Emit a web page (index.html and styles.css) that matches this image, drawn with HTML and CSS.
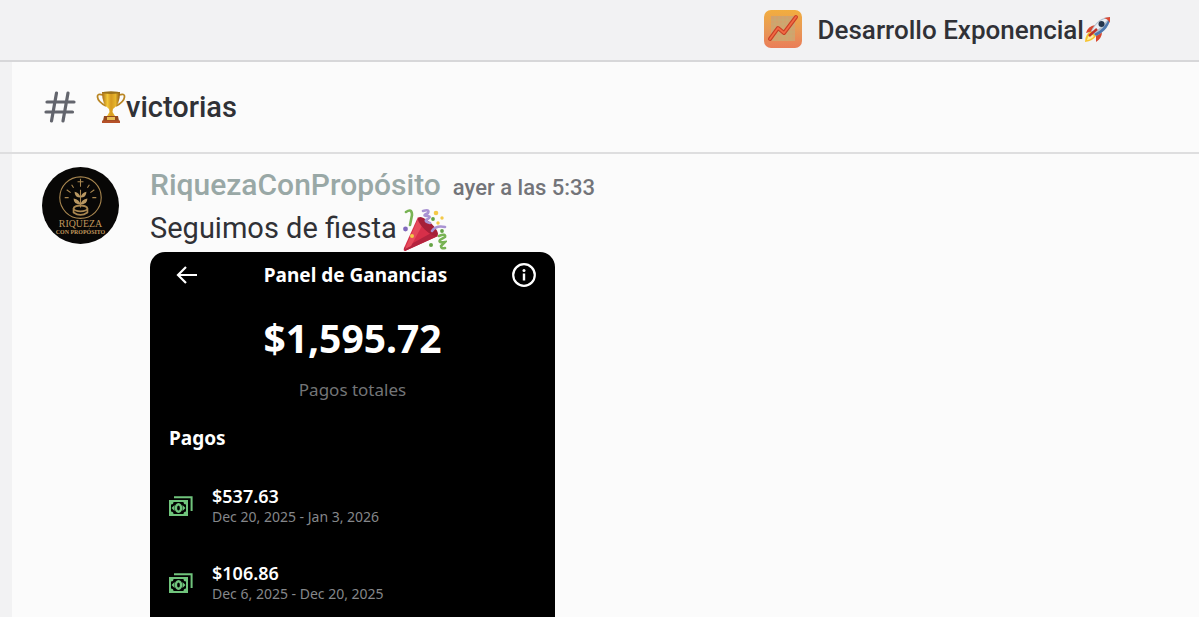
FILE: index.html
```html
<!DOCTYPE html>
<html lang="es">
<head>
<meta charset="utf-8">
<meta name="viewport" content="width=device-width, initial-scale=1">
<title>victorias</title>
<link rel="stylesheet" href="styles.css">
</head>
<body>
<svg class="defs" aria-hidden="true">
  <symbol id="cash" viewBox="0 0 24 20">
    <path d="M5 1.200H22.600V15" fill="none" stroke="currentColor" stroke-width="2"/>
    <path fill="currentColor" fill-rule="evenodd" d="M0 4h19v16H0zM4.500 6A2.500 2.500 0 0 1 2 8.500v7A2.500 2.500 0 0 1 4.500 18h10A2.500 2.500 0 0 1 17 15.500v-7A2.500 2.500 0 0 1 14.500 6z"/>
    <path fill="currentColor" d="M2.500 12l3-3v6zM16.500 12l-3-3v6z"/>
    <ellipse cx="9.500" cy="12" rx="2.600" ry="3.800" fill="none" stroke="currentColor" stroke-width="2.400"/>
  </symbol>
</svg>
<div class="app">
  <header class="titlebar">
    <svg class="server-icon" viewBox="0 0 38 38" aria-hidden="true">
      <defs><linearGradient id="sunset" x1="0" y1="0" x2="0" y2="1"><stop offset="0" stop-color="#f2ad3f"/><stop offset=".5" stop-color="#e89a55"/><stop offset="1" stop-color="#ea7d58"/></linearGradient></defs>
      <rect width="38" height="38" rx="7" fill="url(#sunset)"/>
      <path fill="#d3a16c" d="M7 6h24v25H7z"/>
      <path d="M7 10h24M7 14h24M7 18h24M7 22h24M7 26h24M11 6v25M15 6v25M19 6v25M23 6v25M27 6v25" stroke="#c2ae75" stroke-width=".6"/>
      <path d="M6 29l8-11 6 5L32 7" fill="none" stroke="#c93f26" stroke-width="4" stroke-linecap="round" stroke-linejoin="round"/>
      <path d="M6 29l8-11 6 5L32 7" fill="none" stroke="#f16a43" stroke-width="1.800" stroke-linecap="round" stroke-linejoin="round"/>
    </svg>
    <span class="server-name">Desarrollo Exponencial</span>
    <svg class="rocket" viewBox="0 0 28 28" aria-label="cohete">
      <path fill="#f7c531" d="M7 16Q1 19 1 27Q9 26 12 21z"/>
      <path fill="#fff0a5" d="M7 19Q4 21 3 25Q8 24 10 21z"/>
      <path fill="#d64730" d="M11 10Q4 11 2 18L9 16zM18 17Q18 23 12 27L12 19z"/>
      <path fill="#b2bfce" d="M26 2Q14 2 7 16L12 21Q26 14 26 2z"/>
      <path fill="#e9eef4" d="M25 3Q14 4 8 16L10 18Q19 11 25 3z"/>
      <path fill="#4e78ae" d="M26 2Q20 15 10 19L12 21Q26 14 26 2z"/>
      <path fill="#dc4932" d="M20 3L26 2 26 8Q24 4 20 3z"/>
      <circle cx="17.500" cy="9" r="3" fill="#25364c"/>
      <path d="M13 14L5 21" stroke="#bf3328" stroke-width="2.400"/>
    </svg>
  </header>
  <main class="chat">
    <div class="channel">
      <div class="channel-inner">
        <svg class="hash" viewBox="0 0 32 32" aria-hidden="true"><path d="M12.500 2L7.500 30M24 2L19 30M3 11H30M2 21H28.500" fill="none" stroke="#63656d" stroke-width="3.200" stroke-linecap="round"/></svg>
        <h1 class="channel-name">
          <svg class="trophy" viewBox="0 0 30 32" aria-label="trofeo">
            <defs><linearGradient id="gold"><stop offset="0" stop-color="#a66a13"/><stop offset=".3" stop-color="#f3c838"/><stop offset=".5" stop-color="#d6991f"/><stop offset=".75" stop-color="#e6b52c"/><stop offset="1" stop-color="#8d5710"/></linearGradient></defs>
            <path d="M7 4Q1 2 1.500 6Q2 11 10 15M23 4Q29 2 28.500 6Q28 11 20 15" fill="none" stroke="#b98522" stroke-width="1.800"/>
            <path fill="url(#gold)" d="M6 1H24Q24 14 17 18L16.500 21 19 25H11L13.500 21 13 18Q6 14 6 1z"/>
            <ellipse cx="15" cy="1.600" rx="9" ry="1.300" fill="#9b711a"/>
            <path fill="#93491e" d="M8 25H22L23 30H7z"/><path fill="#e8bd55" d="M11 26H19V29H11z"/><path fill="#b65129" d="M6 29.500H24V32H6z"/>
          </svg><span>victorias</span>
        </h1>
      </div>
    </div>
    <article class="message">
      <svg class="avatar" viewBox="0 0 78 78" role="img" aria-label="RiquezaConPropósito">
        <circle cx="39" cy="39" r="39" fill="#080706"/>
        <g fill="none" stroke="#a98750" stroke-width="1.100">
          <circle cx="39" cy="31" r="21"/>
          <path d="M39 12V20M36 15H42M39 23V41M30 18L32 21M48 18L46 21M25 23L29 26M53 23L49 26M23 31H27M55 31H51"/>
          <ellipse cx="39" cy="42" rx="7" ry="3" stroke-width="1.800"/><path d="M32 42V46Q39 51 46 46V42" stroke-width="1.800"/>
        </g>
        <path fill="#b99862" d="M39 31Q33 31 33 25Q38 26 39 31zM39 31Q45 31 45 25Q40 26 39 31zM39 38Q32 38 32 32Q38 33 39 38zM39 38Q46 38 46 32Q40 33 39 38z"/>
        <text x="39" y="61" class="avatar-big">RIQUEZA</text>
        <text x="39" y="68" class="avatar-small">CON PROPÓSITO</text>
      </svg>
      <div class="content">
        <div class="meta"><span class="author">RiquezaConPropósito</span><time class="time">ayer a las 5:33</time></div>
        <p class="text"><span>Seguimos de fiesta</span>
          <svg class="party" viewBox="0 0 44 42" aria-label="fiesta">
            <path fill="#d72f49" d="M15 8L35 27L2 42Q0 42 1 39z"/>
            <path fill="#b3233e" d="M30 23L35 27L2 42 1 39z"/>
            <path fill="#e64a5b" d="M15 10L20 15 8 37 2 40z"/>
            <ellipse cx="25" cy="17.500" rx="4.500" ry="13" transform="rotate(-47 25 17.500)" fill="#a61f38"/>
            <g fill="none" stroke-linecap="round" stroke-width="2.600">
              <path stroke="#78b354" d="M3 3Q9-1 9 6L7 16M36 27Q43 24 42 28L37 31Q35 34 42 33L38 37Q38 40 42 39"/>
              <path stroke="#a993d3" d="M20 2Q27 0 25 4Q18 7 25 7Q29 8 23 11Q22 13 27 14M29 22Q33 16 42 18"/>
            </g>
            <g fill="#f4c947"><circle cx="33" cy="4" r="2.300"/><circle cx="39" cy="9" r="1.700"/><circle cx="35" cy="14" r="1.700"/><circle cx="9" cy="27" r="2"/></g>
            <g fill="#65a346"><circle cx="30" cy="10" r="1.900"/><circle cx="39" cy="22" r="1.900"/><circle cx="28" cy="36" r="2"/></g>
            <circle cx="2.500" cy="20" r="2.400" fill="#8069bd"/>
          </svg>
        </p>
        <section class="panel">
          <div class="panel-top">
            <button class="icon-button back" type="button" aria-label="Volver"><svg class="icon" viewBox="0 0 24 24"><path d="M22 12H3M11 4L3 12l8 8" fill="none" stroke="currentColor" stroke-width="2.200"/></svg></button>
            <h2 class="panel-title">Panel de Ganancias</h2>
            <button class="icon-button" type="button" aria-label="Información"><svg class="icon" viewBox="0 0 24 24"><circle cx="12" cy="12" r="10.800" fill="none" stroke="currentColor" stroke-width="2.200"/><circle cx="12" cy="7.500" r="1.500" fill="currentColor"/><path fill="currentColor" d="M10.800 10.500h2.400v7h-2.400z"/></svg></button>
          </div>
          <p class="total">$1,595.72</p>
          <p class="total-label">Pagos totales</p>
          <h3 class="section-title">Pagos</h3>
          <ul class="payments">
            <li class="payment"><svg class="cash"><use href="#cash"/></svg><div><p class="amount">$537.63</p><p class="period">Dec 20, 2025 - Jan 3, 2026</p></div></li>
            <li class="payment"><svg class="cash"><use href="#cash"/></svg><div><p class="amount">$106.86</p><p class="period">Dec 6, 2025 - Dec 20, 2025</p></div></li>
          </ul>
        </section>
      </div>
    </article>
  </main>
</div>
</body>
</html>
```
FILE: styles.css
```css
* { box-sizing: border-box; }
body, h1, h2, h3, p, ul { margin: 0; padding: 0; }
body { background: #f2f2f3; color: #303136; font-family: Roboto, "Noto Sans", sans-serif; }
svg { display: block; flex: none; }
.defs { display: none; }
.app { height: 100vh; overflow: hidden; display: flex; flex-direction: column; }
.titlebar { flex: none; height: 62px; display: flex; align-items: center; justify-content: flex-end; padding: 0 87px 2px 16px; border-bottom: 2px solid #d7d7d9; }
.server-icon { width: 38px; height: 38px; margin-right: 16px; }
.server-name { padding-top: 2px; font-size: 26px; font-weight: 500; line-height: 32px; }
.rocket { width: 28px; height: 28px; }
.chat { flex: 1; min-height: 0; display: flex; flex-direction: column; }
.channel { flex: none; padding-left: 12px; border-bottom: 2px solid #dededf; }
.channel-inner { height: 90px; display: flex; align-items: center; gap: 20px; padding-left: 32px; background: #fbfbfb; }
.hash { width: 32px; height: 32px; }
.channel-name { display: flex; align-items: center; font-size: 29px; font-weight: 500; line-height: 32px; }
.trophy { width: 30px; height: 32px; }
.message { flex: 1; min-height: 0; display: flex; gap: 31px; margin-left: 12px; padding: 13px 16px 0 30px; background: #fbfbfb; }
.avatar { width: 77px; height: 77px; }
.avatar-big, .avatar-small { font-family: "Liberation Serif", serif; fill: #c0975c; text-anchor: middle; }
.avatar-big { font-size: 10px; }
.avatar-small { font-size: 6px; font-weight: 700; }
.content { flex: 1; min-width: 0; display: flex; flex-direction: column; }
.meta { display: flex; align-items: baseline; gap: 12px; line-height: 36px; }
.author { font-size: 30px; font-weight: 500; color: #99a8a6; }
.time { font-size: 22px; font-weight: 500; color: #737479; }
.text { display: flex; align-items: flex-start; gap: 6px; height: 46px; padding-top: 3px; font-size: 29px; line-height: 38px; }
.party { width: 44px; height: 42px; }
.panel { flex: 1; max-width: 405px; padding: 8px 19px 0; border-radius: 15px 15px 0 0; background: #000; color: #fff; font-family: "Noto Sans", sans-serif; }
.panel-top { display: flex; align-items: center; justify-content: space-between; height: 30px; }
.icon-button { padding: 0; border: 0; background: none; color: #fff; cursor: pointer; }
.back { padding-left: 6px; }
.icon { width: 24px; height: 24px; }
.panel-title { font-size: 19px; font-weight: 700; line-height: 30px; }
.total { padding-top: 22px; font-size: 39px; font-weight: 700; line-height: 52px; text-align: center; }
.total-label { padding-top: 14px; font-size: 17px; line-height: 24px; text-align: center; color: #737577; }
.section-title { padding-top: 22px; font-size: 19px; line-height: 28px; }
.payments { list-style: none; padding-top: 33px; display: flex; flex-direction: column; gap: 35px; }
.payment { display: flex; align-items: center; gap: 19px; }
.cash { width: 24px; height: 20px; color: #70c47c; }
.amount { font-size: 18px; font-weight: 600; line-height: 22px; }
.period { font-size: 14px; line-height: 20px; color: #85878a; }
```
